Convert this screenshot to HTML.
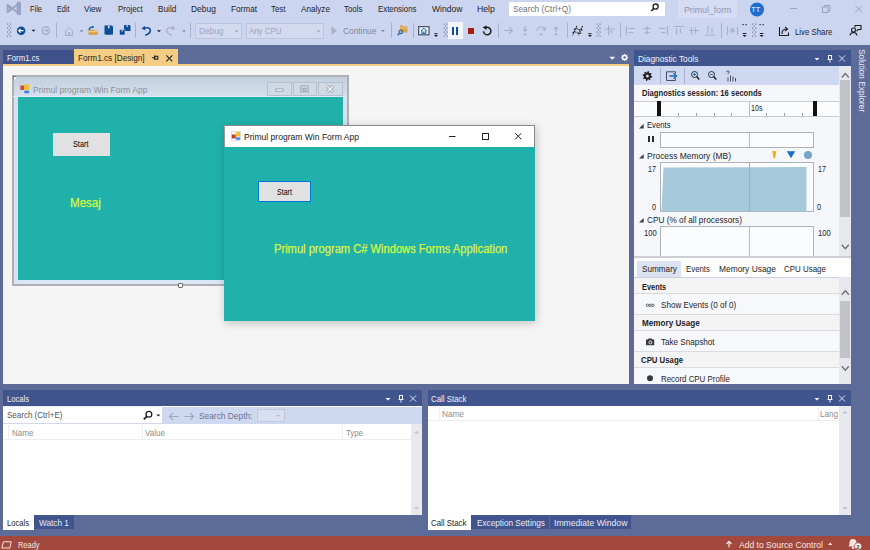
<!DOCTYPE html>
<html><head><meta charset="utf-8">
<style>
*{margin:0;padding:0;box-sizing:border-box}
html,body{width:870px;height:550px;overflow:hidden}
body{position:relative;background:#5D6B99;font-family:"Liberation Sans",sans-serif;font-size:8.3px;color:#1E1E1E}
.a{position:absolute}
.t{position:absolute;white-space:nowrap;line-height:1;transform-origin:0 0}
svg{position:absolute;overflow:visible}
</style></head><body>
<div class="a" style="left:0px;top:0px;width:870px;height:45px;background:#CCD5F0;"></div>
<svg style="left:0;top:0" width="870" height="550" viewBox="0 0 870 550"><g fill="none" stroke="#9AA3C6" stroke-width="1.9" stroke-linejoin="round"><path d="M7.6,5 L7.6,12.2 L10.6,8.6 Z"/><path d="M8,12 L19,3.2 M8,5.2 L19,13.6"/></g><path d="M16.6,2.6 L19.2,1.3 L21,2.4 L21,14.4 L19.2,15.5 L16.6,14.2 Z" fill="#9AA3C6"/></svg>
<div class="t" style="left:29.70px;top:4.85px;font-size:8.8px;color:#1E1E1E;transform:scaleX(0.8472);">File</div>
<div class="t" style="left:56.80px;top:4.85px;font-size:8.8px;color:#1E1E1E;transform:scaleX(0.8209);">Edit</div>
<div class="t" style="left:84.00px;top:4.85px;font-size:8.8px;color:#1E1E1E;transform:scaleX(0.9205);">View</div>
<div class="t" style="left:117.70px;top:4.85px;font-size:8.8px;color:#1E1E1E;transform:scaleX(0.9057);">Project</div>
<div class="t" style="left:157.50px;top:4.85px;font-size:8.8px;color:#1E1E1E;transform:scaleX(0.9406);">Build</div>
<div class="t" style="left:191.00px;top:4.85px;font-size:8.8px;color:#1E1E1E;transform:scaleX(0.9604);">Debug</div>
<div class="t" style="left:230.50px;top:4.85px;font-size:8.8px;color:#1E1E1E;transform:scaleX(0.9326);">Format</div>
<div class="t" style="left:271.00px;top:4.85px;font-size:8.8px;color:#1E1E1E;transform:scaleX(0.8988);">Test</div>
<div class="t" style="left:300.60px;top:4.85px;font-size:8.8px;color:#1E1E1E;transform:scaleX(0.9235);">Analyze</div>
<div class="t" style="left:344.00px;top:4.85px;font-size:8.8px;color:#1E1E1E;transform:scaleX(0.8989);">Tools</div>
<div class="t" style="left:378.00px;top:4.85px;font-size:8.8px;color:#1E1E1E;transform:scaleX(0.8938);">Extensions</div>
<div class="t" style="left:432.00px;top:4.85px;font-size:8.8px;color:#1E1E1E;transform:scaleX(0.9707);">Window</div>
<div class="t" style="left:477.00px;top:4.85px;font-size:8.8px;color:#1E1E1E;transform:scaleX(0.9890);">Help</div>
<div class="a" style="left:509px;top:2px;width:156px;height:14px;background:#FFFFFF;"></div>
<div class="t" style="left:513.00px;top:4.85px;font-size:8.8px;color:#717171;transform:scaleX(0.9369);">Search (Ctrl+Q)</div>
<svg style="left:0;top:0" width="870" height="550" viewBox="0 0 870 550"><circle cx="655.6" cy="6.6" r="2.6" fill="none" stroke="#1E1E1E" stroke-width="1.3"/><path d="M653.8,8.4 L651.2,11" stroke="#1E1E1E" stroke-width="1.6"/></svg>
<div class="a" style="left:678px;top:0px;width:59px;height:18px;background:#D5DCF3;"></div>
<div class="t" style="left:684.00px;top:5.85px;font-size:8.8px;color:#8F96B0;">Primul_form</div>
<svg style="left:0;top:0" width="870" height="550" viewBox="0 0 870 550"><circle cx="757" cy="9.5" r="7" fill="#1C6FD0"/></svg>
<div class="t" style="left:751.30px;top:6.20px;font-size:7.2px;color:#FFFFFF;">TT</div>
<svg style="left:0;top:0" width="870" height="550" viewBox="0 0 870 550"><g stroke="#9AA2BF" stroke-width="1" fill="none"><path d="M790,8.5 H797"/><rect x="822.5" y="7" width="5.5" height="5.5"/><path d="M824.5,7 V5.5 H830 V11 H828"/><path d="M855.3,5.5 L862.3,12.5 M862.3,5.5 L855.3,12.5"/></g></svg>
<svg style="left:0;top:0" width="870" height="550" viewBox="0 0 870 550"><rect x="7" y="23.5" width="1.2" height="1.2" fill="#77809F"/><rect x="10" y="23.5" width="1.2" height="1.2" fill="#77809F"/><rect x="8.5" y="25.5" width="1.2" height="1.2" fill="#77809F"/><rect x="7" y="27.5" width="1.2" height="1.2" fill="#77809F"/><rect x="10" y="27.5" width="1.2" height="1.2" fill="#77809F"/><rect x="8.5" y="29.5" width="1.2" height="1.2" fill="#77809F"/><rect x="7" y="31.5" width="1.2" height="1.2" fill="#77809F"/><rect x="10" y="31.5" width="1.2" height="1.2" fill="#77809F"/><rect x="8.5" y="33.5" width="1.2" height="1.2" fill="#77809F"/><rect x="7" y="35.5" width="1.2" height="1.2" fill="#77809F"/><rect x="10" y="35.5" width="1.2" height="1.2" fill="#77809F"/></svg>
<svg style="left:0;top:0" width="870" height="550" viewBox="0 0 870 550"><circle cx="21.1" cy="30.7" r="4.3" fill="#0E4C96"/><path d="M23.5,30.7 H18.8 M20.6,28.8 L18.7,30.7 L20.6,32.6" stroke="#fff" stroke-width="1.2" fill="none"/></svg>
<svg style="left:0;top:0" width="870" height="550" viewBox="0 0 870 550"><path d="M31.5,29.8 h4 l-2,2 z" fill="#1E1E1E"/></svg>
<svg style="left:0;top:0" width="870" height="550" viewBox="0 0 870 550"><circle cx="45.8" cy="30.6" r="3.7" fill="none" stroke="#A3AAC2" stroke-width="1.2"/><path d="M43.6,30.6 H47.8 M46.2,28.9 L47.9,30.6 L46.2,32.3" stroke="#A3AAC2" stroke-width="1" fill="none"/></svg>
<div class="a" style="left:55.5px;top:23px;width:1px;height:15px;background:#A8B1D1;"></div>
<svg style="left:0;top:0" width="870" height="550" viewBox="0 0 870 550"><g fill="none" stroke="#A8AFC6" stroke-width="1"><path d="M65.5,31 L69,27.5 L72.5,31 V35.5 H65.5 Z"/><path d="M68.5,35.5 V32.5 H70 V35.5"/></g></svg>
<svg style="left:0;top:0" width="870" height="550" viewBox="0 0 870 550"><path d="M79.5,30.3 h4 l-2,2 z" fill="#7E86A2"/></svg>
<svg style="left:0;top:0" width="870" height="550" viewBox="0 0 870 550"><path d="M88.5,29.5 H93 L94,30.5 H98 V35 H88.5 Z" fill="#DCA54A"/><path d="M88.5,31.5 H98" stroke="#F2C77A" stroke-width="1"/><path d="M89,30 Q89.5,26.8 93,27" stroke="#1D64B0" stroke-width="1.3" fill="none"/><path d="M92.2,25.6 L94.4,27 L92.2,28.4 Z" fill="#1D64B0"/></svg>
<svg style="left:0;top:0" width="870" height="550" viewBox="0 0 870 550"><path d="M104.5,25.5 H112 L113,26.5 V34.5 H104.5 Z" fill="#0E4C96"/><rect x="108" y="25.8" width="1.6" height="2.6" fill="#CCD5F0"/><rect x="106" y="31.5" width="5.5" height="3" fill="#0E4C96"/></svg>
<svg style="left:0;top:0" width="870" height="550" viewBox="0 0 870 550"><path d="M124,25 H129.5 L130.5,26 V31 H124 Z" fill="#0E4C96"/><rect x="126.5" y="25.2" width="1.3" height="1.8" fill="#CCD5F0"/><path d="M119.5,29.5 H124.2 L125,30.3 V35 H119.5 Z" fill="#0E4C96" stroke="#CCD5F0" stroke-width="0.6"/><rect x="121.6" y="29.8" width="1.2" height="1.8" fill="#CCD5F0"/></svg>
<div class="a" style="left:134.5px;top:23px;width:1px;height:15px;background:#A8B1D1;"></div>
<svg style="left:0;top:0" width="870" height="550" viewBox="0 0 870 550"><path d="M143.6,28.2 Q150.5,26.5 150.3,30.8 Q150,33.5 145.2,35.3" stroke="#0E4C96" stroke-width="1.6" fill="none"/><path d="M141.6,28.6 L145,25.8 L145.3,30.6 Z" fill="#0E4C96"/></svg>
<svg style="left:0;top:0" width="870" height="550" viewBox="0 0 870 550"><path d="M157,30.2 h4 l-2,2 z" fill="#1E1E1E"/></svg>
<svg style="left:0;top:0" width="870" height="550" viewBox="0 0 870 550"><path d="M173.4,28.2 Q166.5,26.5 166.7,30.8 Q167,33.5 171.8,35.3" stroke="#A8AFC6" stroke-width="1.3" fill="none"/><path d="M175.4,28.6 L172,25.8 L171.7,30.6 Z" fill="#A8AFC6"/></svg>
<svg style="left:0;top:0" width="870" height="550" viewBox="0 0 870 550"><path d="M182,30.3 h4 l-2,2 z" fill="#7E86A2"/></svg>
<div class="a" style="left:190px;top:23px;width:1px;height:15px;background:#A8B1D1;"></div>
<div class="a" style="left:195px;top:22.5px;width:47px;height:16px;background:#D3DAF0;border:1px solid #BDC5DE"></div>
<div class="t" style="left:198.50px;top:26.85px;font-size:8.8px;color:#9CA3BC;transform:scaleX(0.9412);">Debug</div>
<svg style="left:0;top:0" width="870" height="550" viewBox="0 0 870 550"><path d="M234.5,30.5 h4 l-2,2 z" fill="#9CA3BC"/></svg>
<div class="a" style="left:246px;top:22.5px;width:78px;height:16px;background:#D3DAF0;border:1px solid #BDC5DE"></div>
<div class="t" style="left:249.00px;top:26.85px;font-size:8.8px;color:#9CA3BC;transform:scaleX(0.8933);">Any CPU</div>
<svg style="left:0;top:0" width="870" height="550" viewBox="0 0 870 550"><path d="M316.5,30.5 h4 l-2,2 z" fill="#9CA3BC"/></svg>
<svg style="left:0;top:0" width="870" height="550" viewBox="0 0 870 550"><path d="M331.5,26.5 L337,30.7 L331.5,35 Z" fill="#A8AFC6"/></svg>
<div class="t" style="left:342.80px;top:26.85px;font-size:8.8px;color:#7E86A2;transform:scaleX(0.9484);">Continue</div>
<svg style="left:0;top:0" width="870" height="550" viewBox="0 0 870 550"><path d="M381,30 h4 l-2,2 z" fill="#7E86A2"/></svg>
<div class="a" style="left:390.5px;top:23px;width:1px;height:15px;background:#A8B1D1;"></div>
<svg style="left:0;top:0" width="870" height="550" viewBox="0 0 870 550"><path d="M400,25.5 H403 L404,26.5 H407.5 V32.5 H400 Z" fill="#DCA54A"/><path d="M400,28 H407.5" stroke="#EEC177" stroke-width="0.8"/><circle cx="400.8" cy="31.8" r="1.8" fill="none" stroke="#1D64B0" stroke-width="1.1"/><path d="M399.5,33.2 L397.6,35.2" stroke="#1D64B0" stroke-width="1.3"/></svg>
<div class="a" style="left:412.5px;top:23px;width:1px;height:15px;background:#A8B1D1;"></div>
<svg style="left:0;top:0" width="870" height="550" viewBox="0 0 870 550"><rect x="418.6" y="26.6" width="10.4" height="8.2" fill="#E4ECFA" stroke="#4E5566" stroke-width="1.2"/><path d="M421,31 L423.8,28.2 L426.6,31 M421.8,30.4 V33.4 H425.8 V30.4" fill="none" stroke="#1D64B0" stroke-width="1"/><rect x="423.2" y="31.6" width="1.2" height="1.8" fill="#1D64B0"/></svg>
<svg style="left:0;top:0" width="870" height="550" viewBox="0 0 870 550"><rect x="434.3" y="33.2" width="3.2" height="1" fill="#1E1E1E"/><path d="M434,35 h4 l-2,2 z" fill="#1E1E1E"/></svg>
<svg style="left:0;top:0" width="870" height="550" viewBox="0 0 870 550"><rect x="443.5" y="23.5" width="1.2" height="1.2" fill="#77809F"/><rect x="446.5" y="23.5" width="1.2" height="1.2" fill="#77809F"/><rect x="445.0" y="25.5" width="1.2" height="1.2" fill="#77809F"/><rect x="443.5" y="27.5" width="1.2" height="1.2" fill="#77809F"/><rect x="446.5" y="27.5" width="1.2" height="1.2" fill="#77809F"/><rect x="445.0" y="29.5" width="1.2" height="1.2" fill="#77809F"/><rect x="443.5" y="31.5" width="1.2" height="1.2" fill="#77809F"/><rect x="446.5" y="31.5" width="1.2" height="1.2" fill="#77809F"/><rect x="445.0" y="33.5" width="1.2" height="1.2" fill="#77809F"/><rect x="443.5" y="35.5" width="1.2" height="1.2" fill="#77809F"/><rect x="446.5" y="35.5" width="1.2" height="1.2" fill="#77809F"/></svg>
<div class="a" style="left:448px;top:22px;width:15px;height:17px;background:#F3F5FC;"></div>
<div class="a" style="left:452.3px;top:27px;width:2px;height:7.5px;background:#0E4C96;"></div>
<div class="a" style="left:456.3px;top:27px;width:2px;height:7.5px;background:#0E4C96;"></div>
<div class="a" style="left:468px;top:28px;width:6px;height:6px;background:#A81E10;"></div>
<svg style="left:0;top:0" width="870" height="550" viewBox="0 0 870 550"><path d="M485.3,27.9 A3.7,3.7 0 1 1 483.5,31.2" stroke="#1E1E1E" stroke-width="1.5" fill="none"/><path d="M482.6,27.2 L486.6,25.4 L486.4,30 Z" fill="#1E1E1E"/></svg>
<div class="a" style="left:497.5px;top:23px;width:1px;height:15px;background:#A8B1D1;"></div>
<svg style="left:0;top:0" width="870" height="550" viewBox="0 0 870 550"><g stroke="#A8AFC6" stroke-width="1.2" fill="none"><path d="M504,30.5 H512.5 M509.2,27.2 L512.5,30.5 L509.2,33.8"/><path d="M525,26 V31 M523,29.2 L525,31.2 L527,29.2"/><path d="M537,31 Q537.5,27 541,27 Q544.5,27 545,30 M545.5,27.3 L545,30.3 L542.2,29.5"/><path d="M556,32 V27 M554,29 L556,27 L558,29"/></g><circle cx="525" cy="34.2" r="1.2" fill="#A8AFC6"/><circle cx="541" cy="34.2" r="1.2" fill="#A8AFC6"/><circle cx="556" cy="34.2" r="1.2" fill="#A8AFC6"/></svg>
<div class="a" style="left:566.5px;top:23px;width:1px;height:15px;background:#A8B1D1;"></div>
<svg style="left:0;top:0" width="870" height="550" viewBox="0 0 870 550"><g stroke="#1E1E1E" stroke-width="1.1" fill="none" stroke-dasharray="1.6 0.9"><path d="M576.8,26 L572.5,35.5 M582.5,26 L578.2,35.5 M573.8,29.5 Q577,28 579,29.5 T583,29 M572.5,32.8 Q575.5,31.3 577.5,32.8 T581.5,32.3"/></g></svg>
<svg style="left:0;top:0" width="870" height="550" viewBox="0 0 870 550"><rect x="588.3" y="33.2" width="3.2" height="1" fill="#1E1E1E"/><path d="M588,35 h4 l-2,2 z" fill="#1E1E1E"/></svg>
<svg style="left:0;top:0" width="870" height="550" viewBox="0 0 870 550"><rect x="596.5" y="23.5" width="1.2" height="1.2" fill="#77809F"/><rect x="599.5" y="23.5" width="1.2" height="1.2" fill="#77809F"/><rect x="598.0" y="25.5" width="1.2" height="1.2" fill="#77809F"/><rect x="596.5" y="27.5" width="1.2" height="1.2" fill="#77809F"/><rect x="599.5" y="27.5" width="1.2" height="1.2" fill="#77809F"/><rect x="598.0" y="29.5" width="1.2" height="1.2" fill="#77809F"/><rect x="596.5" y="31.5" width="1.2" height="1.2" fill="#77809F"/><rect x="599.5" y="31.5" width="1.2" height="1.2" fill="#77809F"/><rect x="598.0" y="33.5" width="1.2" height="1.2" fill="#77809F"/><rect x="596.5" y="35.5" width="1.2" height="1.2" fill="#77809F"/><rect x="599.5" y="35.5" width="1.2" height="1.2" fill="#77809F"/></svg>
<svg style="left:0;top:0" width="870" height="550" viewBox="0 0 870 550"><g stroke="#A8AFC6" stroke-width="1.2" fill="none"><path d="M608.6,25.5 V35 M605,29 H615"/></g><rect x="610.4" y="30.8" width="2.2" height="1.8" fill="#A8AFC6"/></svg>
<div class="a" style="left:620px;top:23px;width:1px;height:15px;background:#A8B1D1;"></div>
<svg style="left:0;top:0" width="870" height="550" viewBox="0 0 870 550"><g stroke="#A8AFC6" stroke-width="1.1" fill="none"><path d="M626.5,26 V35 M628.5,28.5 H635 M628.5,32.5 H633"/><path d="M647,26 V35 M643.5,28.5 H650.5 M644.5,32.5 H649.5"/><path d="M667.5,26 V35 M659,28.5 H665.5 M661,32.5 H665.5"/><path d="M673.5,26.5 H684 M676.5,28.5 V35 M680.5,28.5 V33"/><path d="M689,30.5 H699 M691.5,27 V34.5 M695.5,27.5 V33.5"/><path d="M705,35 H715 M708,26 V33 M712,28 V33"/></g></svg>
<div class="a" style="left:721px;top:23px;width:1px;height:15px;background:#A8B1D1;"></div>
<svg style="left:0;top:0" width="870" height="550" viewBox="0 0 870 550"><g stroke="#A8AFC6" stroke-width="1.1" fill="none"><path d="M727.5,26.5 V35 M737.5,26.5 V35"/></g><g stroke="#A8AFC6" stroke-width="1.1"><path d="M732.5,27.8 V33.2 M730.2,29.2 L734.8,31.8 M734.8,29.2 L730.2,31.8"/></g></svg>
<svg style="left:0;top:0" width="870" height="550" viewBox="0 0 870 550"><rect x="742.5" y="24" width="1.2" height="1.2" fill="#1E1E1E"/><rect x="745.5" y="24" width="1.2" height="1.2" fill="#1E1E1E"/><rect x="742.8" y="33" width="3.6" height="1" fill="#1E1E1E"/><path d="M742.5,35 h4.2 l-2.1,2 z" fill="#1E1E1E"/></svg>
<svg style="left:0;top:0" width="870" height="550" viewBox="0 0 870 550"><rect x="752" y="23.5" width="1.2" height="1.2" fill="#77809F"/><rect x="755" y="23.5" width="1.2" height="1.2" fill="#77809F"/><rect x="753.5" y="25.5" width="1.2" height="1.2" fill="#77809F"/><rect x="752" y="27.5" width="1.2" height="1.2" fill="#77809F"/><rect x="755" y="27.5" width="1.2" height="1.2" fill="#77809F"/><rect x="753.5" y="29.5" width="1.2" height="1.2" fill="#77809F"/><rect x="752" y="31.5" width="1.2" height="1.2" fill="#77809F"/><rect x="755" y="31.5" width="1.2" height="1.2" fill="#77809F"/><rect x="753.5" y="33.5" width="1.2" height="1.2" fill="#77809F"/><rect x="752" y="35.5" width="1.2" height="1.2" fill="#77809F"/><rect x="755" y="35.5" width="1.2" height="1.2" fill="#77809F"/></svg>
<svg style="left:0;top:0" width="870" height="550" viewBox="0 0 870 550"><rect x="759.5" y="24" width="1.2" height="1.2" fill="#1E1E1E"/><rect x="762.5" y="24" width="1.2" height="1.2" fill="#1E1E1E"/><rect x="759.8" y="33" width="3.6" height="1" fill="#1E1E1E"/><path d="M759.5,35 h4.2 l-2.1,2 z" fill="#1E1E1E"/></svg>
<svg style="left:0;top:0" width="870" height="550" viewBox="0 0 870 550"><g stroke="#1E1E1E" stroke-width="1.1" fill="none"><path d="M779.5,27 V35.5 H788.5 V32.5"/><path d="M782,34 Q782,29 786.5,29 M785,26.8 L787.6,29 L785,31.2"/></g></svg>
<div class="t" style="left:794.50px;top:27.85px;font-size:8.8px;color:#1E1E1E;transform:scaleX(0.8894);">Live Share</div>
<svg style="left:0;top:0" width="870" height="550" viewBox="0 0 870 550"><g stroke="#1E1E1E" stroke-width="1.1" fill="none"><circle cx="853.5" cy="30" r="2"/><path d="M850,35.5 Q850.5,32.5 853.5,32.5 Q856.5,32.5 857,35.5"/><path d="M855,27.5 V25.5 H861 V29.5 H858 L856.5,31"/></g></svg>
<div class="a" style="left:3px;top:50px;width:71px;height:14px;background:#3E5289;"></div>
<div class="t" style="left:6.90px;top:53.85px;font-size:8.8px;color:#F0F2FA;transform:scaleX(0.8857);">Form1.cs</div>
<div class="a" style="left:74px;top:49px;width:104px;height:15px;background:#F5CC84;"></div>
<div class="t" style="left:77.80px;top:53.85px;font-size:8.8px;color:#1E1E1E;transform:scaleX(0.9333);">Form1.cs [Design]</div>
<svg style="left:0;top:0" width="870" height="550" viewBox="0 0 870 550"><g stroke="#2A2A2A" stroke-width="1.1" fill="none"><path d="M152,57.7 H154.5 M154.5,55.6 V59.8"/><rect x="154.8" y="56.3" width="3" height="2.8"/></g><path d="M166.3,55.3 L172.3,61.3 M172.3,55.3 L166.3,61.3" stroke="#2A2A2A" stroke-width="1.2"/></svg>
<div class="a" style="left:3px;top:64px;width:626px;height:2px;background:#F5CC84;"></div>
<svg style="left:0;top:0" width="870" height="550" viewBox="0 0 870 550"><path d="M609.3,56.8 H615.2 L612.25,59.8 Z" fill="#F0F2FA"/></svg>
<svg style="left:0;top:0" width="870" height="550" viewBox="0 0 870 550"><polygon points="628.50,57.40 627.09,58.43 627.36,60.16 625.63,59.89 624.60,61.30 623.57,59.89 621.84,60.16 622.11,58.43 620.70,57.40 622.11,56.37 621.84,54.64 623.57,54.91 624.60,53.50 625.63,54.91 627.36,54.64 627.09,56.37" fill="#F0F2FA"/><circle cx="624.6" cy="57.4" r="1.2" fill="#5D6B99"/></svg>
<div class="a" style="left:3px;top:66px;width:626px;height:318px;background:#F5F5F5;"></div>
<div class="a" style="left:12px;top:75px;width:337px;height:211px;background:linear-gradient(#C3CFDD,#D6E1ED 20px,#D9E4F0);border:2px solid #ADB0B4"></div>
<div class="a" style="left:18px;top:97px;width:325px;height:183px;background:#20B2AA;"></div>
<div class="a" style="left:18px;top:280px;width:325px;height:4px;background:#DAE7F4;"></div>
<div class="a" style="left:13.4px;top:96px;width:334px;height:1px;background:#DCEAF5;"></div>
<svg style="left:0;top:0" width="870" height="550" viewBox="0 0 870 550"><rect x="20.3" y="85.5" width="4" height="4.5" fill="#D04A3C"/><rect x="24.3" y="84.2" width="4.8" height="5.8" fill="#F2C12E"/><rect x="24.3" y="90.7" width="4.8" height="2.5" fill="#3F7BD8"/></svg>
<div class="t" style="left:32.50px;top:85.85px;font-size:8.8px;color:#8C9199;transform:scaleX(0.9673);">Primul program Win Form App</div>
<div class="a" style="left:267px;top:82px;width:24.5px;height:14px;background:#D0DAE6;border:1px solid #B6C0CD"></div>
<div class="a" style="left:292.5px;top:82px;width:24.5px;height:14px;background:#D0DAE6;border:1px solid #B6C0CD"></div>
<div class="a" style="left:318px;top:82px;width:24.5px;height:14px;background:#D0DAE6;border:1px solid #B6C0CD"></div>
<svg style="left:0;top:0" width="870" height="550" viewBox="0 0 870 550"><rect x="276" y="89" width="7" height="2.2" fill="#fff" stroke="#8E949C" stroke-width="0.8"/><rect x="301.2" y="86.2" width="6.6" height="6" fill="none" stroke="#8E949C" stroke-width="1.6"/><rect x="301.2" y="86.2" width="6.6" height="6" fill="none" stroke="#fff" stroke-width="0.5"/><rect x="303" y="88.3" width="3" height="2" fill="none" stroke="#8E949C" stroke-width="0.8"/><path d="M326.5,85.5 L333.5,92.5 M333.5,85.5 L326.5,92.5" stroke="#8E949C" stroke-width="2.6"/><path d="M326.5,85.5 L333.5,92.5 M333.5,85.5 L326.5,92.5" stroke="#fff" stroke-width="1.2"/></svg>
<div class="a" style="left:13px;top:76px;width:3px;height:3px;background:#fff;border-left:1px solid #777;border-top:1px solid #777"></div>
<div class="a" style="left:178px;top:283px;width:5px;height:5px;background:#fff;border:0.8px solid #6A6A6A;border-radius:1px"></div>
<div class="a" style="left:53px;top:132.5px;width:56.5px;height:23.3px;background:#E1E1E1;"></div>
<div class="t" style="left:73.00px;top:140.19px;font-size:8.4px;color:#000;transform:scaleX(0.8715);">Start</div>
<div class="t" style="left:69.50px;top:197.14px;font-size:12px;color:#DCF43E;transform:scaleX(0.9635);-webkit-text-stroke:0.25px #DCF43E">Mesaj</div>
<div class="a" style="left:224px;top:125px;width:311px;height:196px;background:#20B2AA;box-shadow:1px 2px 9px rgba(0,0,0,.22)"></div>
<div class="a" style="left:224px;top:125px;width:311px;height:22px;background:#FFFFFF;border-top:1px solid #8A8A8A;border-left:1px solid #9A9A9A;border-right:1px solid #8A8A8A"></div>
<svg style="left:0;top:0" width="870" height="550" viewBox="0 0 870 550"><rect x="231.3" y="131.5" width="9" height="9" fill="#fff" stroke="#C8C8C8" stroke-width="0.6"/><rect x="231.8" y="134.5" width="4" height="4" fill="#C8392C"/><rect x="235.8" y="132" width="4.3" height="4.5" fill="#F0C030"/><rect x="235.8" y="137.3" width="4.3" height="2.5" fill="#4A86E0"/></svg>
<div class="t" style="left:243.50px;top:132.85px;font-size:8.8px;color:#1A1A1A;transform:scaleX(0.9715);">Primul program Win Form App</div>
<svg style="left:0;top:0" width="870" height="550" viewBox="0 0 870 550"><path d="M449,136.5 H455.5" stroke="#222" stroke-width="1"/><rect x="482.5" y="133.5" width="6" height="6" fill="none" stroke="#222" stroke-width="1"/><path d="M515.2,133.2 L521.3,139.3 M521.3,133.2 L515.2,139.3" stroke="#222" stroke-width="1"/></svg>
<div class="a" style="left:258.2px;top:181.4px;width:52.4px;height:20.4px;background:#E1E1E1;border:1.5px solid #0078D7"></div>
<div class="t" style="left:276.50px;top:189.36px;font-size:8.2px;color:#000;transform:scaleX(0.8604);">Start</div>
<div class="t" style="left:273.70px;top:243.14px;font-size:12px;color:#DCF43E;transform:scaleX(0.9280);-webkit-text-stroke:0.25px #DCF43E">Primul program C# Windows Forms Application</div>
<div class="a" style="left:634px;top:50px;width:217px;height:16px;background:#40558E;"></div>
<div class="t" style="left:638.00px;top:54.85px;font-size:8.8px;color:#F0F2FA;transform:scaleX(0.9435);">Diagnostic Tools</div>
<svg style="left:0;top:0" width="870" height="550" viewBox="0 0 870 550"><path d="M814.5,58 h5 l-2.5,2.5 z" fill="#F0F2FA"/><g stroke="#F0F2FA" stroke-width="1" fill="none"><path d="M828.5,55.5 V59.5 H831.5 V55.5 M827.5,59.5 H832.5 M830,59.5 V62.5 M828,55.5 H832"/></g><path d="M839,55.5 L845,61.5 M845,55.5 L839,61.5" stroke="#E4E8F4" stroke-width="0.95"/></svg>
<div class="a" style="left:634px;top:66px;width:205px;height:19px;background:#CFD8F1;"></div>
<div class="a" style="left:660px;top:68px;width:1px;height:16px;background:#A8B1D1;"></div>
<div class="a" style="left:684px;top:68px;width:1px;height:16px;background:#A8B1D1;"></div>
<svg style="left:0;top:0" width="870" height="550" viewBox="0 0 870 550"><polygon points="652.28,76.48 652.09,77.42 650.49,77.65 650.11,78.22 650.51,79.79 649.71,80.32 648.42,79.35 647.74,79.48 646.92,80.88 645.98,80.69 645.75,79.09 645.18,78.71 643.61,79.11 643.08,78.31 644.05,77.02 643.92,76.34 642.52,75.52 642.71,74.58 644.31,74.35 644.69,73.78 644.29,72.21 645.09,71.68 646.38,72.65 647.06,72.52 647.88,71.12 648.82,71.31 649.05,72.91 649.62,73.29 651.19,72.89 651.72,73.69 650.75,74.98 650.88,75.66" fill="#1E1E1E"/><circle cx="647.4" cy="76" r="1.5" fill="#CFD8F1"/></svg>
<svg style="left:0;top:0" width="870" height="550" viewBox="0 0 870 550"><path d="M675.5,73.5 V71.8 H666.5 V80.5 H675.5 V78.5" stroke="#4A4F5C" stroke-width="1" fill="none"/><path d="M669.5,76 H676" stroke="#1D64B0" stroke-width="1.5"/><path d="M673.5,73.2 L676.6,76 L673.5,78.8" stroke="#1D64B0" stroke-width="1.3" fill="none"/></svg>
<svg style="left:0;top:0" width="870" height="550" viewBox="0 0 870 550"><circle cx="694.5" cy="74.5" r="3" fill="none" stroke="#1E1E1E" stroke-width="0.9"/><path d="M696.6,76.6 L699.3,79.5" stroke="#1E1E1E" stroke-width="1.5"/><path d="M693.0,74.5 H696.0" stroke="#1D64B0" stroke-width="0.9"/><path d="M694.5,73 V76" stroke="#1D64B0" stroke-width="0.9"/></svg>
<svg style="left:0;top:0" width="870" height="550" viewBox="0 0 870 550"><circle cx="711.5" cy="74.5" r="3" fill="none" stroke="#1E1E1E" stroke-width="0.9"/><path d="M713.6,76.6 L716.3,79.5" stroke="#1E1E1E" stroke-width="1.5"/><path d="M710.0,74.5 H713.0" stroke="#1D64B0" stroke-width="0.9"/></svg>
<svg style="left:0;top:0" width="870" height="550" viewBox="0 0 870 550"><g stroke="#4A4F5C" stroke-width="1"><path d="M728,81.5 V77.5 M730.5,81.5 V75.5 M733,81.5 V76.5 M735.5,81.5 V78"/></g><path d="M726.5,72.2 Q726.8,70.8 728,70.8 Q729.3,70.9 729.2,72.2 Q729,73 728,73.5 V74.3" stroke="#4A4F5C" stroke-width="0.9" fill="none"/></svg>
<div class="a" style="left:634px;top:85px;width:205px;height:171px;background:#F5F7FB;"></div>
<div class="t" style="left:642.00px;top:89.02px;font-size:8.6px;color:#1E1E1E;font-weight:bold;transform:scaleX(0.8864);">Diagnostics session: 16 seconds</div>
<div class="a" style="left:634px;top:101px;width:205px;height:1px;background:#C9CCD3;"></div>
<div class="a" style="left:634px;top:102px;width:205px;height:14px;background:#FBFCFE;"></div>
<div class="a" style="left:634px;top:116px;width:205px;height:1px;background:#C9CCD3;"></div>
<div class="a" style="left:749px;top:102px;width:1px;height:14px;background:#B9BCC4;"></div>
<div class="a" style="left:678px;top:113px;width:1px;height:3px;background:#9AA0AA;"></div>
<div class="a" style="left:696px;top:113px;width:1px;height:3px;background:#9AA0AA;"></div>
<div class="a" style="left:714px;top:113px;width:1px;height:3px;background:#9AA0AA;"></div>
<div class="a" style="left:731px;top:113px;width:1px;height:3px;background:#9AA0AA;"></div>
<div class="a" style="left:766px;top:113px;width:1px;height:3px;background:#9AA0AA;"></div>
<div class="a" style="left:784px;top:113px;width:1px;height:3px;background:#9AA0AA;"></div>
<div class="a" style="left:802px;top:113px;width:1px;height:3px;background:#9AA0AA;"></div>
<div class="a" style="left:657px;top:101px;width:4px;height:15px;background:#111;"></div>
<div class="a" style="left:813px;top:101px;width:4px;height:15px;background:#111;"></div>
<div class="t" style="left:751.00px;top:103.85px;font-size:8.8px;color:#1E1E1E;transform:scaleX(0.8116);">10s</div>
<svg style="left:0;top:0" width="870" height="550" viewBox="0 0 870 550"><path d="M643.6999999999999,123.8 V128.4 H639.0999999999999 Z" fill="#3C3C3C"/></svg>
<div class="t" style="left:647.00px;top:120.85px;font-size:8.8px;color:#1E1E1E;transform:scaleX(0.8729);">Events</div>
<div class="a" style="left:660px;top:132px;width:154px;height:16px;background:#FBFCFE;border:1px solid #AEB1B8"></div>
<div class="a" style="left:749.3px;top:133px;width:1px;height:14px;background:#B9BCC4;"></div>
<div class="a" style="left:648.3px;top:136.3px;width:2px;height:6px;background:#2B2B2B;"></div>
<div class="a" style="left:651.8px;top:136.3px;width:2px;height:6px;background:#2B2B2B;"></div>
<svg style="left:0;top:0" width="870" height="550" viewBox="0 0 870 550"><path d="M643.6999999999999,153.9 V158.5 H639.0999999999999 Z" fill="#3C3C3C"/></svg>
<div class="t" style="left:647.00px;top:151.85px;font-size:8.8px;color:#1E1E1E;transform:scaleX(0.9594);">Process Memory (MB)</div>
<svg style="left:0;top:0" width="870" height="550" viewBox="0 0 870 550"><path d="M772.2,151 H776.4 L775.4,157 L774.3,159 L773.2,157 Z" fill="#F2B01E"/><path d="M786.8,151.2 H795.2 L791,158.2 Z" fill="#1C6CC8"/><circle cx="808" cy="155" r="4" fill="#74A6C8"/></svg>
<div class="a" style="left:660px;top:162px;width:154px;height:50px;background:#FBFCFE;border:1px solid #AEB1B8"></div>
<div class="a" style="left:749.3px;top:163px;width:1px;height:48px;background:#B9BCC4;"></div>
<svg style="left:0;top:0" width="870" height="550" viewBox="0 0 870 550"><path d="M661.5,211.5 L663.5,167.5 L806.5,167 V211.5 Z" fill="#A5C8DB"/></svg>
<div class="a" style="left:749px;top:163px;width:1px;height:49px;background:#8FB2C8;"></div>
<div class="t" style="left:648.00px;top:164.85px;font-size:8.8px;color:#1E1E1E;transform:scaleX(0.8087);">17</div>
<div class="t" style="left:818.00px;top:164.85px;font-size:8.8px;color:#1E1E1E;transform:scaleX(0.8087);">17</div>
<div class="t" style="left:652.00px;top:202.85px;font-size:8.8px;color:#1E1E1E;transform:scaleX(0.8400);">0</div>
<div class="t" style="left:817.00px;top:202.85px;font-size:8.8px;color:#1E1E1E;transform:scaleX(0.8400);">0</div>
<svg style="left:0;top:0" width="870" height="550" viewBox="0 0 870 550"><path d="M643.6999999999999,217.9 V222.5 H639.0999999999999 Z" fill="#3C3C3C"/></svg>
<div class="t" style="left:647.00px;top:215.85px;font-size:8.8px;color:#1E1E1E;transform:scaleX(0.9382);">CPU (% of all processors)</div>
<div class="a" style="left:660px;top:226px;width:154px;height:31px;background:#FBFCFE;border:1px solid #AEB1B8"></div>
<div class="a" style="left:749.3px;top:227px;width:1px;height:29px;background:#B9BCC4;"></div>
<div class="t" style="left:643.60px;top:228.85px;font-size:8.8px;color:#1E1E1E;transform:scaleX(0.8658);">100</div>
<div class="t" style="left:818.20px;top:228.85px;font-size:8.8px;color:#1E1E1E;transform:scaleX(0.8658);">100</div>
<div class="a" style="left:839px;top:66px;width:12px;height:190px;background:#E6E8EE;"></div>
<div class="a" style="left:840px;top:80px;width:10px;height:137px;background:#C2C3C9;"></div>
<svg style="left:0;top:0" width="870" height="550" viewBox="0 0 870 550"><path d="M841.8,77.5 L845.3,73.5 L848.8,77.5" stroke="#6D6F78" stroke-width="1.3" fill="none"/><path d="M841.8,244.8 L845.3,248.8 L848.8,244.8" stroke="#6D6F78" stroke-width="1.3" fill="none"/></svg>
<div class="a" style="left:634px;top:256px;width:217px;height:2px;background:#CDCFD5;"></div>
<div class="a" style="left:634px;top:258px;width:217px;height:19px;background:#FFFFFF;"></div>
<div class="a" style="left:637px;top:261px;width:44px;height:16px;background:#DCE2F0;"></div>
<div class="t" style="left:641.50px;top:264.85px;font-size:8.8px;color:#1E1E1E;transform:scaleX(0.9284);">Summary</div>
<div class="t" style="left:685.50px;top:264.85px;font-size:8.8px;color:#1E1E1E;transform:scaleX(0.8911);">Events</div>
<div class="t" style="left:719.00px;top:264.85px;font-size:8.8px;color:#1E1E1E;transform:scaleX(0.9540);">Memory Usage</div>
<div class="t" style="left:784.00px;top:264.85px;font-size:8.8px;color:#1E1E1E;transform:scaleX(0.9022);">CPU Usage</div>
<div class="a" style="left:634px;top:277px;width:217px;height:1px;background:#C9D0E4;"></div>
<div class="a" style="left:634px;top:278px;width:205px;height:106px;background:#F7F8FC;"></div>
<div class="a" style="left:634px;top:278px;width:205px;height:15px;background:#F4F4F4;"></div>
<div class="a" style="left:634px;top:315px;width:205px;height:15px;background:#F4F4F4;"></div>
<div class="a" style="left:634px;top:352px;width:205px;height:15px;background:#F4F4F4;"></div>
<div class="a" style="left:634px;top:293px;width:205px;height:1px;background:#DADBDF;"></div>
<div class="a" style="left:634px;top:314px;width:205px;height:1px;background:#DADBDF;"></div>
<div class="a" style="left:634px;top:330px;width:205px;height:1px;background:#DADBDF;"></div>
<div class="a" style="left:634px;top:351px;width:205px;height:1px;background:#DADBDF;"></div>
<div class="a" style="left:634px;top:367px;width:205px;height:1px;background:#DADBDF;"></div>
<div class="t" style="left:641.70px;top:283.02px;font-size:8.6px;color:#1E1E1E;font-weight:bold;transform:scaleX(0.8591);">Events</div>
<div class="t" style="left:660.70px;top:300.85px;font-size:8.8px;color:#1E1E1E;transform:scaleX(0.9214);">Show Events (0 of 0)</div>
<div class="t" style="left:641.60px;top:319.02px;font-size:8.6px;color:#1E1E1E;font-weight:bold;transform:scaleX(0.9453);">Memory Usage</div>
<div class="t" style="left:661.00px;top:337.85px;font-size:8.8px;color:#1E1E1E;transform:scaleX(0.9191);">Take Snapshot</div>
<div class="t" style="left:641.10px;top:356.02px;font-size:8.6px;color:#1E1E1E;font-weight:bold;transform:scaleX(0.9066);">CPU Usage</div>
<div class="t" style="left:661.00px;top:374.85px;font-size:8.8px;color:#1E1E1E;transform:scaleX(0.8977);">Record CPU Profile</div>
<svg style="left:0;top:0" width="870" height="550" viewBox="0 0 870 550"><g fill="none" stroke="#555" stroke-width="0.9"><circle cx="647.5" cy="305.3" r="1.2"/><circle cx="650.2" cy="305.3" r="1.2"/><circle cx="652.9" cy="305.3" r="1.2"/></g><path d="M646,339.6 H647.8 L648.6,338.4 H651.8 L652.6,339.6 H654.2 V345.2 H646 Z" fill="#3A3A3A"/><circle cx="650.4" cy="342.4" r="1.5" fill="none" stroke="#F7F8FC" stroke-width="0.9"/><circle cx="650" cy="378.2" r="3" fill="#3A3A3A"/></svg>
<div class="a" style="left:839px;top:277px;width:12px;height:107px;background:#E6E8EE;"></div>
<div class="a" style="left:840px;top:301px;width:10px;height:57px;background:#C2C3C9;"></div>
<svg style="left:0;top:0" width="870" height="550" viewBox="0 0 870 550"><path d="M841.8,294.8 L845.3,290.8 L848.8,294.8" stroke="#6D6F78" stroke-width="1.3" fill="none"/><path d="M841.8,366.2 L845.3,370.2 L848.8,366.2" stroke="#6D6F78" stroke-width="1.3" fill="none"/></svg>
<div class="t" style="left:856.6px;top:49px;font-size:8.3px;color:#E8EBF5;transform-origin:0 0;transform:translate(9px,0) rotate(90deg)">Solution Explorer</div>
<div class="a" style="left:3px;top:390px;width:419px;height:16px;background:#40558E;"></div>
<div class="t" style="left:6.50px;top:394.85px;font-size:8.8px;color:#F0F2FA;transform:scaleX(0.8644);">Locals</div>
<svg style="left:0;top:0" width="870" height="550" viewBox="0 0 870 550"><path d="M385.5,398 h5 l-2.5,2.5 z" fill="#F0F2FA"/><g stroke="#F0F2FA" stroke-width="1" fill="none"><path d="M399.5,395.5 V399.5 H402.5 V395.5 M398.5,399.5 H403.5 M401,399.5 V402.5 M399,395.5 H403"/></g><path d="M410,395.5 L416,401.5 M416,395.5 L410,401.5" stroke="#E4E8F4" stroke-width="0.95"/></svg>
<div class="a" style="left:3px;top:406px;width:419px;height:109px;background:#FFFFFF;"></div>
<div class="a" style="left:162px;top:407px;width:260px;height:17px;background:#CFD8F1;"></div>
<div class="a" style="left:3px;top:406px;width:159px;height:1px;background:#E6EAF5;"></div>
<div class="a" style="left:3px;top:423px;width:159px;height:1px;background:#D3D9EA;"></div>
<div class="t" style="left:6.50px;top:410.85px;font-size:8.8px;color:#555555;transform:scaleX(0.9109);">Search (Ctrl+E)</div>
<svg style="left:0;top:0" width="870" height="550" viewBox="0 0 870 550"><circle cx="148.9" cy="414.3" r="2.9" fill="none" stroke="#1E1E1E" stroke-width="1.3"/><path d="M146.8,416.4 L143.8,419.4" stroke="#1E1E1E" stroke-width="1.7"/><path d="M156.3,414.5 h4 l-2,2 z" fill="#1E1E1E"/></svg>
<svg style="left:0;top:0" width="870" height="550" viewBox="0 0 870 550"><g stroke="#9FA6BF" stroke-width="1.1" fill="none"><path d="M169.5,416.5 H178.5 M173,413 L169.5,416.5 L173,420"/><path d="M184.5,416.5 H193.5 M190,413 L193.5,416.5 L190,420"/></g></svg>
<div class="t" style="left:199.00px;top:411.85px;font-size:8.8px;color:#6D7390;transform:scaleX(0.9500);">Search Depth:</div>
<div class="a" style="left:257px;top:409px;width:28px;height:13px;background:#D9DFF0;border:1px solid #C3C9DA"></div>
<svg style="left:0;top:0" width="870" height="550" viewBox="0 0 870 550"><path d="M276.5,415 h3.5 l-1.75,1.75 z" fill="#A8AFC6"/></svg>
<div class="a" style="left:3px;top:424px;width:408px;height:15px;background:#FFFFFF;"></div>
<div class="a" style="left:3px;top:439px;width:408px;height:1px;background:#EEEEF2;"></div>
<div class="a" style="left:8px;top:425px;width:1px;height:14px;background:#EEEEF2;"></div>
<div class="a" style="left:142px;top:425px;width:1px;height:14px;background:#EEEEF2;"></div>
<div class="a" style="left:342px;top:425px;width:1px;height:14px;background:#EEEEF2;"></div>
<div class="t" style="left:11.50px;top:428.85px;font-size:8.8px;color:#8C8C8C;transform:scaleX(0.9121);">Name</div>
<div class="t" style="left:145.00px;top:428.85px;font-size:8.8px;color:#8C8C8C;transform:scaleX(0.9110);">Value</div>
<div class="t" style="left:346.00px;top:428.85px;font-size:8.8px;color:#8C8C8C;transform:scaleX(0.8864);">Type</div>
<div class="a" style="left:411px;top:424px;width:11px;height:91px;background:#E8E9EE;"></div>
<svg style="left:0;top:0" width="870" height="550" viewBox="0 0 870 550"><path d="M413.8,433.6 h5.5 l-2.75,-2.8 z" fill="#C3C5CC"/><path d="M413.8,507 h5.5 l-2.75,2.8 z" fill="#C3C5CC"/></svg>
<div class="a" style="left:3px;top:515px;width:31px;height:15px;background:#FFFFFF;"></div>
<div class="t" style="left:6.60px;top:518.85px;font-size:8.8px;color:#1E1E1E;transform:scaleX(0.8682);">Locals</div>
<div class="a" style="left:34px;top:515px;width:40px;height:14px;background:#40558E;"></div>
<div class="t" style="left:38.60px;top:518.85px;font-size:8.8px;color:#E8EBF5;transform:scaleX(0.9330);">Watch 1</div>
<div class="a" style="left:428px;top:390px;width:423px;height:16px;background:#40558E;"></div>
<div class="t" style="left:431.00px;top:394.85px;font-size:8.8px;color:#F0F2FA;transform:scaleX(0.8955);">Call Stack</div>
<svg style="left:0;top:0" width="870" height="550" viewBox="0 0 870 550"><path d="M814.5,398 h5 l-2.5,2.5 z" fill="#F0F2FA"/><g stroke="#F0F2FA" stroke-width="1" fill="none"><path d="M828.5,395.5 V399.5 H831.5 V395.5 M827.5,399.5 H832.5 M830,399.5 V402.5 M828,395.5 H832"/></g><path d="M839,395.5 L845,401.5 M845,395.5 L839,401.5" stroke="#E4E8F4" stroke-width="0.95"/></svg>
<div class="a" style="left:428px;top:406px;width:423px;height:109px;background:#FFFFFF;"></div>
<div class="a" style="left:428px;top:420px;width:411px;height:1px;background:#EEEEF2;"></div>
<div class="a" style="left:439px;top:407px;width:1px;height:13px;background:#EEEEF2;"></div>
<div class="a" style="left:818px;top:407px;width:1px;height:13px;background:#EEEEF2;"></div>
<div class="t" style="left:442.00px;top:409.85px;font-size:8.8px;color:#8C8C8C;transform:scaleX(0.9333);">Name</div>
<div class="t" style="left:820.00px;top:409.85px;font-size:8.8px;color:#8C8C8C;transform:scaleX(0.9148);">Lang</div>
<div class="a" style="left:839px;top:406px;width:12px;height:109px;background:#E8E9EE;"></div>
<svg style="left:0;top:0" width="870" height="550" viewBox="0 0 870 550"><path d="M842.2,413.6 h5.5 l-2.75,-2.8 z" fill="#C3C5CC"/><path d="M842.2,507 h5.5 l-2.75,2.8 z" fill="#C3C5CC"/></svg>
<div class="a" style="left:428px;top:515px;width:43px;height:15px;background:#FFFFFF;"></div>
<div class="t" style="left:431.00px;top:518.85px;font-size:8.8px;color:#1E1E1E;transform:scaleX(0.8955);">Call Stack</div>
<div class="a" style="left:471px;top:515px;width:78px;height:14px;background:#40558E;"></div>
<div class="t" style="left:476.50px;top:518.85px;font-size:8.8px;color:#E8EBF5;transform:scaleX(0.9324);">Exception Settings</div>
<div class="a" style="left:550px;top:515px;width:81px;height:14px;background:#40558E;"></div>
<div class="t" style="left:554.00px;top:518.85px;font-size:8.8px;color:#E8EBF5;transform:scaleX(0.9808);">Immediate Window</div>
<div class="a" style="left:0px;top:536px;width:870px;height:14px;background:#A3483C;"></div>
<svg style="left:0;top:0" width="870" height="550" viewBox="0 0 870 550"><path d="M1.8,548 L3.4,541.8 H11.2 L9.8,548 Z" fill="none" stroke="#F6E6E3" stroke-width="1"/></svg>
<div class="t" style="left:18.00px;top:540.85px;font-size:8.8px;color:#F6E6E3;transform:scaleX(0.8452);">Ready</div>
<svg style="left:0;top:0" width="870" height="550" viewBox="0 0 870 550"><path d="M729,547.5 V541.5 M726.5,544 L729,541.3 L731.5,544" stroke="#F6E6E3" stroke-width="1.2" fill="none"/></svg>
<div class="t" style="left:739.00px;top:540.85px;font-size:8.8px;color:#F6E6E3;transform:scaleX(0.9700);">Add to Source Control</div>
<svg style="left:0;top:0" width="870" height="550" viewBox="0 0 870 550"><path d="M828,545 h4.4 l-2.2,-2.4 z" fill="#F6E6E3"/></svg>
<svg style="left:0;top:0" width="870" height="550" viewBox="0 0 870 550"><path d="M848.5,546.5 Q849.5,545.5 849.5,543 Q849.5,539 853,539 Q856.5,539 856.5,543 Q856.5,545.5 857.5,546.5 Z" fill="#F6E6E3"/><circle cx="853" cy="547.8" r="1.2" fill="#F6E6E3"/><circle cx="858" cy="546.3" r="3.6" fill="#FFFFFF" stroke="#A3483C" stroke-width="0.8"/><text x="856.3" y="548.5" font-size="6" font-family="Liberation Sans" fill="#333" font-weight="bold">2</text></svg>
</body></html>
